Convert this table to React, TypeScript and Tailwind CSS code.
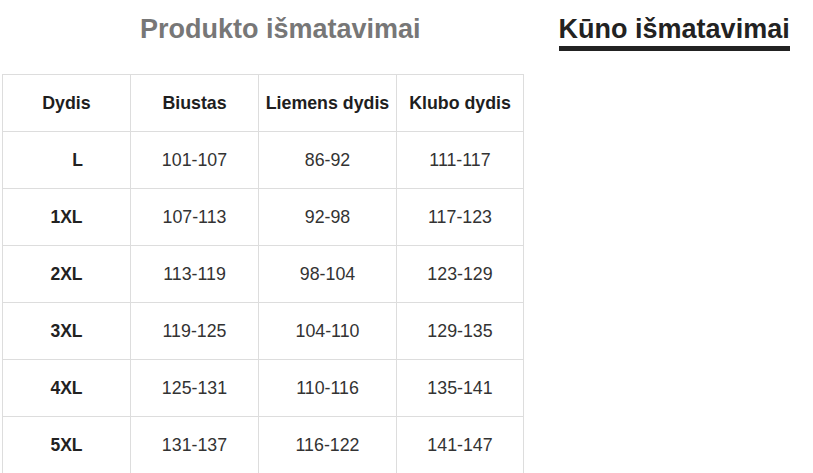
import React from "react";

const rows = [
  ["L", "101-107", "86-92", "111-117"],
  ["1XL", "107-113", "92-98", "117-123"],
  ["2XL", "113-119", "98-104", "123-129"],
  ["3XL", "119-125", "104-110", "129-135"],
  ["4XL", "125-131", "110-116", "135-141"],
  ["5XL", "131-137", "116-122", "141-147"],
];

const headers = ["Dydis", "Biustas", "Liemens dydis", "Klubo dydis"];

export default function App() {
  return (
    <div
      className="w-[813px] h-[473px] overflow-hidden bg-white"
      style={{ fontFamily: '"Liberation Sans", Arial, sans-serif' }}
    >
      <div className="h-[74px] flex items-start pt-[16px]">
        <div className="ml-[140px] text-[27px] leading-none font-bold text-[#777777] whitespace-nowrap">
          Produkto išmatavimai
        </div>
        <div className="ml-[138px] flex flex-col">
          <div className="text-[27px] leading-none font-bold text-[#222222] whitespace-nowrap">
            Kūno išmatavimai
          </div>
          <div className="mt-[3px] h-[5px] bg-[#222222]" />
        </div>
      </div>
      <div className="ml-[2px] w-fit border-l border-t border-[#dddddd] grid grid-cols-[128px_128px_138px_127px]">
        {headers.map((h) => (
          <div
            key={h}
            className="h-[57px] border-r border-b border-[#dddddd] flex items-center justify-center text-[17.8px] font-bold text-[#1e1e1e] whitespace-nowrap"
          >
            {h}
          </div>
        ))}
        {rows.map((r) =>
          r.map((c, i) => (
            <div
              key={r[0] + i}
              className={
                i === 0
                  ? "h-[57px] border-r border-b border-[#dddddd] flex items-center justify-center text-[17.5px] font-bold text-[#222222]"
                  : "h-[57px] border-r border-b border-[#dddddd] flex items-center justify-center text-[17.8px] text-[#333333]"
              }
            >
              <span className={c === "L" ? "pl-[22px]" : ""}>{c}</span>
            </div>
          ))
        )}
      </div>
    </div>
  );
}
